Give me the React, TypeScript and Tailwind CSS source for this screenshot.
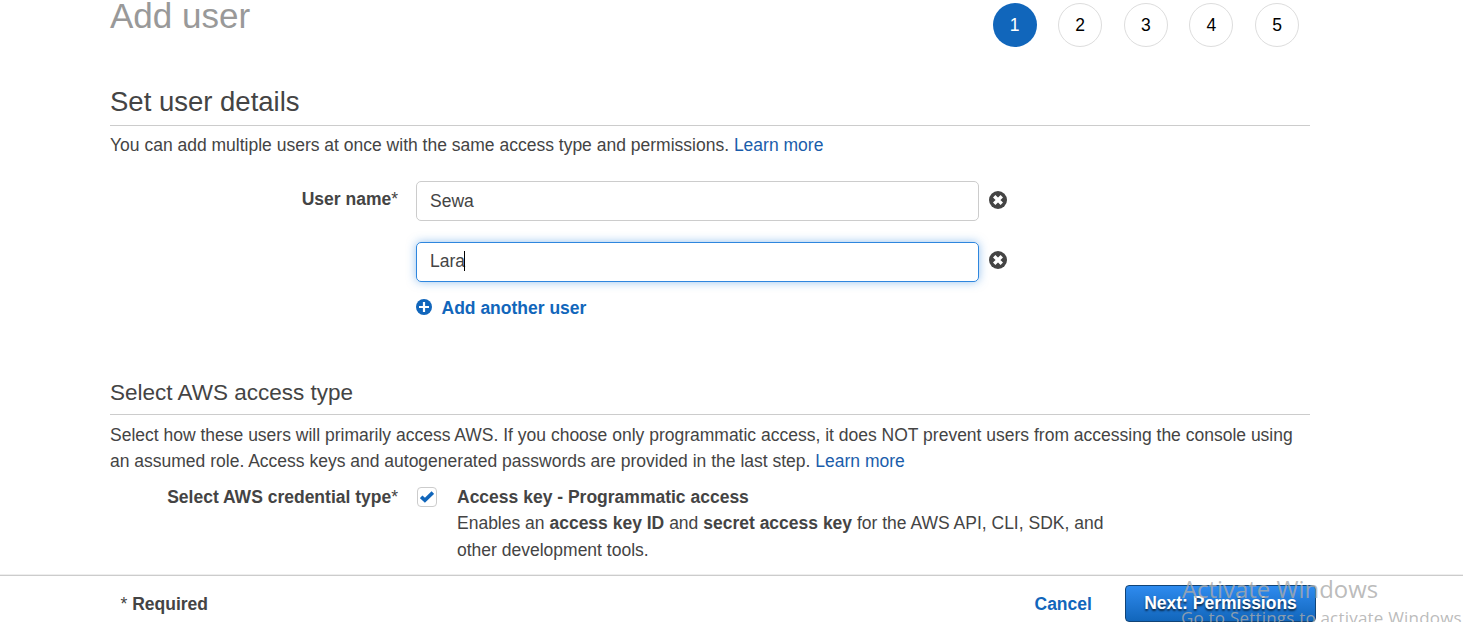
import type { ReactNode } from "react";

const steps = [1, 2, 3, 4, 5];

function Steps() {
  return (
    <ol className="mt-[3px] mr-[11px] flex gap-[21.6px]">
      {steps.map((n) => (
        <li
          key={n}
          className={
            n === 1
              ? "flex size-[44px] items-center justify-center rounded-full bg-[#1166bb] text-white"
              : "flex size-[44px] items-center justify-center rounded-full border border-[#dddddd] text-black"
          }
        >
          {n}
        </li>
      ))}
    </ol>
  );
}

function RemoveIcon() {
  return (
    <svg className="size-[18px]" viewBox="0 0 18 18" aria-hidden="true">
      <circle cx="9" cy="9" r="9" fill="#444444" />
      <path d="M5.2 5.2l7.6 7.6M12.8 5.2l-7.6 7.6" stroke="#ffffff" strokeWidth="3.4" />
    </svg>
  );
}

function PlusIcon() {
  return (
    <svg className="-mt-[2px] size-[16px]" viewBox="0 0 16 16" aria-hidden="true">
      <circle cx="8" cy="8" r="8" fill="#1166bb" />
      <path d="M8 3v10M3 8h10" stroke="#ffffff" strokeWidth="2.2" />
    </svg>
  );
}

function CheckIcon() {
  return (
    <svg className="h-[12px] w-[14px]" viewBox="0 0 14 12" aria-hidden="true">
      <path d="M1.2 5.8l3.7 3.4L12.8 1.6" fill="none" stroke="#1166bb" strokeWidth="3.6" />
    </svg>
  );
}

function UserField({ value, focused = false }: { value: string; focused?: boolean }) {
  return (
    <div className="flex h-[40px] items-start">
      <div
        className={
          focused
            ? "flex h-[40px] w-[563px] items-center rounded-[5px] border border-[#2e86de] pb-[2px] pl-[13px] shadow-[0_0_10px_rgba(46,134,222,0.5)]"
            : "flex h-[40px] w-[563px] items-center rounded-[5px] border border-[#cccccc] pl-[13px]"
        }
      >
        <span>{value}</span>
        {focused && <span className="-ml-px h-[20px] w-px bg-black" />}
      </div>
      <div className={focused ? "mt-[9px] ml-[10px]" : "mt-[10px] ml-[10px]"}>
        <RemoveIcon />
      </div>
    </div>
  );
}

function Link({ children }: { children: ReactNode }) {
  return (
    <a href="#" className="text-[#1a5dab]">
      {children}
    </a>
  );
}

export default function App() {
  return (
    <div className="relative flex h-[622px] w-[1463px] flex-col overflow-hidden bg-white font-['Liberation_Sans',Arial,sans-serif] text-[17.5px] leading-[26.25px] whitespace-nowrap text-[#444444]">
      <main className="ml-[110px] h-[574px] w-[1200px]">
        <header className="flex h-[80px] items-start justify-between">
          <h1 className="-mt-[4px] text-[35px] leading-[40px] text-[#999999]">Add user</h1>
          <Steps />
        </header>

        <section className="h-[294px]">
          <h2 className="h-[46px] border-b border-[#cccccc] pt-[5px] text-[27.5px] leading-[33px]">
            Set user details
          </h2>
          <p className="pt-[6px]">
            You can add multiple users at once with the same access type and permissions.{" "}
            <Link>Learn more</Link>
          </p>
          <div className="mt-[23px] flex">
            <div className="mt-[5px] w-[288px] text-right font-bold">
              User name<span className="font-normal">*</span>
            </div>
            <div className="ml-[18px] flex flex-col">
              <UserField value="Sewa" />
              <div className="h-[21px]" />
              <UserField value="Lara" focused />
              <button className="mt-[13px] flex items-center gap-[9.5px] font-bold text-[#1166bb]">
                <PlusIcon />
                <span>Add another user</span>
              </button>
            </div>
          </div>
        </section>

        <section>
          <h2 className="h-[41px] border-b border-[#cccccc] pt-[5px] text-[22.5px] leading-[28px]">
            Select AWS access type
          </h2>
          <p className="pt-[7px]">
            Select how these users will primarily access AWS. If you choose only programmatic
            access, it does NOT prevent users from accessing the console using
            <br />
            an assumed role. Access keys and autogenerated passwords are provided in the last
            step. <Link>Learn more</Link>
          </p>
          <div className="mt-[9px] flex">
            <div className="w-[288px] text-right font-bold">
              Select AWS credential type<span className="font-normal">*</span>
            </div>
            <div className="mt-[3px] ml-[19px] flex size-[20px] items-center justify-center rounded-[4px] border border-[#cccccc]">
              <CheckIcon />
            </div>
            <div className="ml-[20px] leading-[26.6px]">
              <div className="font-bold">Access key - Programmatic access</div>
              <p>
                Enables an <b>access key ID</b> and <b>secret access key</b> for the AWS API, CLI,
                SDK, and
                <br />
                other development tools.
              </p>
            </div>
          </div>
        </section>
      </main>

      <footer className="flex h-[48px] shrink-0 items-start border-t border-[#eeeeee] bg-white pl-[120.5px] font-bold shadow-[inset_0_1px_0_#cccccc]">
        <div className="mt-[16px] w-[914px]">
          <span className="font-normal">*</span> Required
        </div>
        <button className="mt-[16px] w-[90.5px] text-left text-[#1166bb]">Cancel</button>
        <button className="mt-[10px] h-[37px] w-[191px] rounded-[4px] border border-[#114477] bg-linear-to-b from-[#2e8bef] to-[#1166bb] text-white [text-shadow:0_2px_2px_rgba(0,0,0,0.65)]">
          Next: Permissions
        </button>
      </footer>

      <div className="pointer-events-none absolute top-[572px] left-[1182px] font-['Open_Sans',sans-serif] text-[#aaaaaa]/80">
        <div className="text-[23.9px] leading-[33px]">Activate Windows</div>
        <div className="-ml-px text-[17px] leading-[26px] tracking-[0.2px]">
          Go to Settings to activate Windows.
        </div>
      </div>
    </div>
  );
}
